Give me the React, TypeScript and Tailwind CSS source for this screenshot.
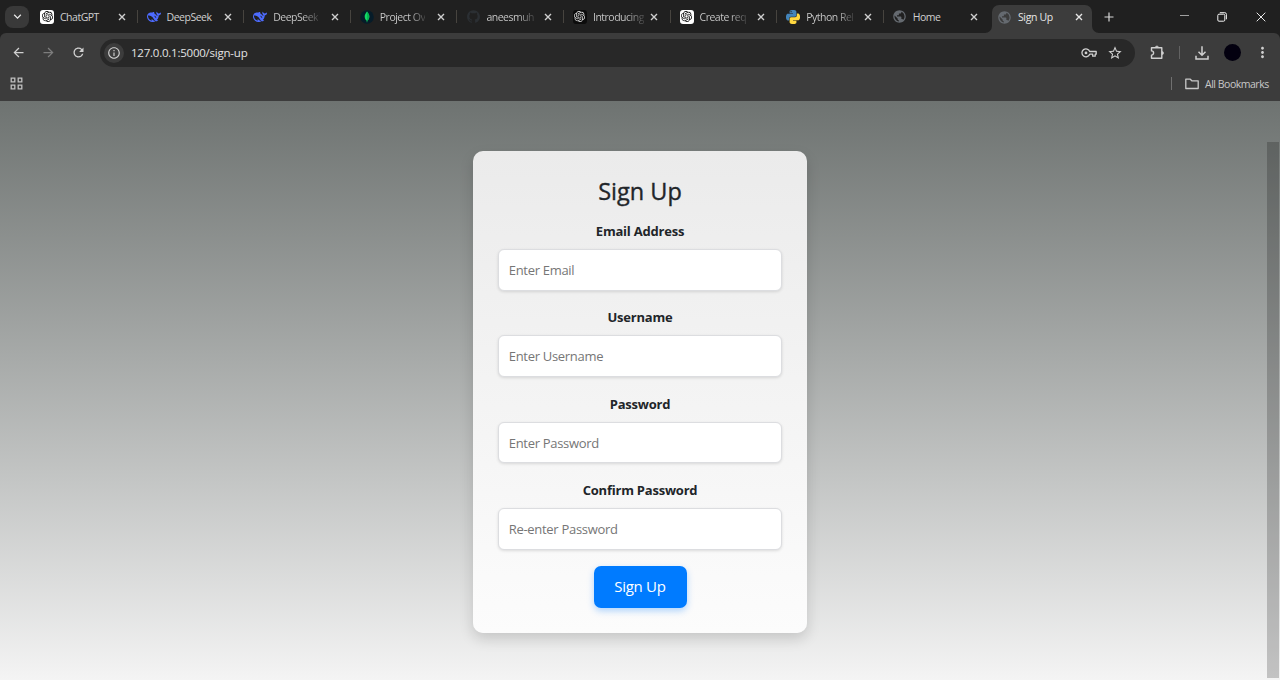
import React from "react";
import { SiOpenai, SiGithub } from "react-icons/si";
import {
  MdArrowBack, MdArrowForward, MdRefresh, MdInfoOutline, MdStarBorder,
  MdMoreVert, MdPublic, MdKeyboardArrowDown,
} from "react-icons/md";

const GptLight = () => (
  <span className="flex size-[14px] items-center justify-center rounded-[3px] bg-white text-black">
    <SiOpenai className="size-[11px]" />
  </span>
);

const GptDark = () => (
  <span className="flex size-[14px] items-center justify-center rounded-[3px] bg-[#0c0c0c] text-[#e4e4e4]">
    <SiOpenai className="size-[11px]" />
  </span>
);

const DeepSeek = () => (
  <svg viewBox="0 0 24 24" className="size-[14px]" fill="#4d6bfe">
    <path d="M23.748 4.482c-.254-.124-.364.113-.512.234-.051.039-.094.09-.137.136-.372.397-.806.657-1.373.626-.829-.046-1.537.214-2.163.848-.133-.782-.575-1.248-1.247-1.548-.352-.156-.708-.311-.955-.65-.172-.241-.219-.51-.305-.774-.055-.16-.11-.323-.293-.35-.2-.031-.278.136-.356.276-.313.572-.434 1.202-.422 1.84.027 1.436.633 2.58 1.838 3.393.137.093.172.187.129.323-.082.28-.18.552-.266.833-.055.179-.137.217-.329.14a5.526 5.526 0 01-1.736-1.18c-.857-.828-1.631-1.742-2.597-2.458a11.365 11.365 0 00-.689-.471c-.985-.957.13-1.743.388-1.836.27-.098.093-.432-.779-.428-.872.004-1.67.295-2.687.684a3.055 3.055 0 01-.465.137 9.597 9.597 0 00-2.883-.102c-1.885.21-3.39 1.102-4.497 2.623C.082 8.606-.231 10.684.152 12.85c.403 2.284 1.569 4.175 3.36 5.653 1.858 1.533 3.997 2.284 6.438 2.14 1.482-.085 3.133-.284 4.994-1.86.47.234.962.327 1.78.397.63.059 1.236-.03 1.705-.128.735-.156.684-.837.419-.961-2.155-1.004-1.682-.595-2.113-.926 1.096-1.296 2.746-2.642 3.392-7.003.05-.347.007-.565 0-.845-.004-.17.035-.237.23-.256a4.173 4.173 0 001.545-.475c1.396-.763 1.96-2.015 2.093-3.517.02-.23-.004-.467-.247-.588zM11.581 18c-2.089-1.642-3.102-2.183-3.52-2.16-.392.024-.321.471-.235.763.09.288.207.486.371.739.114.167.192.416-.113.603-.673.416-1.842-.14-1.897-.167-1.361-.802-2.5-1.86-3.301-3.307-.774-1.393-1.224-2.887-1.298-4.482-.02-.386.093-.522.477-.592a4.696 4.696 0 011.529-.039c2.132.312 3.946 1.265 5.468 2.774.868.86 1.525 1.887 2.202 2.891.72 1.066 1.494 2.082 2.48 2.914.348.292.625.514.891.677-.802.09-2.14.11-3.054-.614zm1-6.44a.306.306 0 01.415-.287.302.302 0 01.2.288.306.306 0 01-.31.307.303.303 0 01-.304-.308zm3.11 1.596c-.2.081-.399.151-.59.16a1.245 1.245 0 01-.798-.254c-.274-.23-.47-.358-.552-.758a1.73 1.73 0 01.016-.588c.07-.327-.008-.537-.239-.727-.187-.156-.426-.199-.688-.199a.559.559 0 01-.254-.078c-.11-.054-.2-.19-.114-.358.028-.054.16-.186.192-.21.356-.202.767-.136 1.146.016.352.144.618.408 1.001.782.391.451.462.576.685.914.176.265.336.537.445.848.067.195-.019.354-.25.452z" />
  </svg>
);

const Mongo = () => (
  <svg viewBox="0 0 14 14" className="size-[14px]">
    <circle cx="7" cy="7" r="6.8" fill="#061c29" />
    <path d="M7 1.6C8.7 3.6 9.3 5 9.3 6.7c0 2-1 3.3-2 4v1.5h-.6v-1.5c-1-.7-2-2-2-4C4.7 5 5.3 3.6 7 1.6z" fill="#12d765" />
    <path d="M7 1.6C8.7 3.6 9.3 5 9.3 6.7c0 2-1 3.3-2.3 4z" fill="#06b653" />
  </svg>
);

const Python = () => (
  <svg viewBox="0 0 24 24" className="size-[14px]">
    <path fill="#4384b9" d="M14.25.18l.9.2.73.26.59.3.45.32.34.34.25.34.16.33.1.3.04.26.02.2-.01.13V8.5l-.05.63-.13.55-.21.46-.26.38-.3.31-.33.25-.35.19-.35.14-.33.1-.3.07-.26.04-.21.02H8.77l-.69.05-.59.14-.5.22-.41.27-.33.32-.27.35-.2.36-.15.37-.1.35-.07.32-.04.27-.02.21v3.06H3.17l-.21-.03-.28-.07-.32-.12-.35-.18-.36-.26-.36-.36-.35-.46-.32-.59-.28-.73-.21-.88-.14-1.05-.05-1.23.06-1.22.16-1.04.24-.87.32-.71.36-.57.4-.44.42-.33.42-.24.4-.16.36-.1.32-.05.24-.01h.16l.06.01h8.16v-.83H6.18l-.01-2.75-.02-.37.05-.34.11-.31.17-.28.25-.26.31-.23.38-.2.44-.18.51-.15.58-.12.64-.1.71-.06.77-.04.84-.02 1.27.05zm-6.3 1.98l-.23.33-.08.41.08.41.23.34.33.22.41.09.41-.09.33-.22.23-.34.08-.41-.08-.41-.23-.33-.33-.22-.41-.09-.41.09z" />
    <path fill="#ffd83f" d="M21.04 6.11l.28.06.32.12.35.18.36.27.36.35.35.47.32.59.28.73.21.88.14 1.04.05 1.23-.06 1.23-.16 1.04-.24.86-.32.71-.36.57-.4.45-.42.33-.42.24-.4.16-.36.09-.32.05-.24.02-.16-.01h-8.22v.82h5.84l.01 2.76.02.36-.05.34-.11.31-.17.29-.25.25-.31.24-.38.2-.44.17-.51.15-.58.13-.64.09-.71.07-.77.04-.84.01-1.27-.04-1.07-.14-.9-.2-.73-.25-.59-.3-.45-.33-.34-.34-.25-.34-.16-.33-.1-.3-.04-.25-.02-.2.01-.13v-5.34l.05-.64.13-.54.21-.46.26-.38.3-.32.33-.24.35-.2.35-.14.33-.1.3-.06.26-.04.21-.02.13-.01h5.84l.69-.05.59-.14.5-.21.41-.28.33-.32.27-.35.2-.36.15-.36.1-.35.07-.32.04-.28.02-.21V6.07h2.09l.14.01z" />
  </svg>
);

const Globe = () => <MdPublic className="size-[15px] shrink-0 text-[#656a70]" />;

const Close = () => (
  <svg viewBox="0 0 8 8" className="size-2 shrink-0" fill="none" stroke="currentColor" strokeWidth="1.4">
    <path d="M1 1l6 6M7 1L1 7" />
  </svg>
);

const Key = ({ className }: { className: string }) => (
  <svg viewBox="0 0 16 10" className={className} fill="none" stroke="currentColor" strokeWidth="1.3">
    <path d="M8.700 3.500h6.500v2.700h-1v2h-2.500v-2H8.700a4 4 0 110-2.700z" strokeLinejoin="round" />
    <circle cx="5" cy="4.900" r="1.400" fill="currentColor" stroke="none" />
  </svg>
);

const Puzzle = ({ className }: { className: string }) => (
  <svg viewBox="0 0 15 15" className={className} fill="none" stroke="currentColor" strokeWidth="1.400" strokeLinejoin="round">
    <path d="M1.500 2.700h10.300v10.600H1.500v-3.200a2.100 2.100 0 000-4.200z" />
    <path d="M5.300 2.500a1.600 1.600 0 013.200 0zM12 6.400a1.600 1.600 0 010 3.200z" fill="currentColor" strokeWidth=".5" />
  </svg>
);

const Download = ({ className }: { className: string }) => (
  <svg viewBox="0 0 14 14" className={className} fill="none" stroke="currentColor" strokeWidth="1.500">
    <path d="M7 .3v8.700M3.500 5.700L7 9.200l3.500-3.500M1 9.700v3.200h12V9.700" />
  </svg>
);

const Folder = ({ className }: { className: string }) => (
  <svg viewBox="0 0 14 12" className={className} fill="none" stroke="currentColor" strokeWidth="1.300" strokeLinejoin="round">
    <path d="M.8 1.200h4.500l1.500 1.600h6.400v7.700H.8z" />
  </svg>
);

const tabs: { icon: React.ReactNode; title: string; fade?: boolean }[] = [
  { icon: <GptLight />, title: "ChatGPT" },
  { icon: <DeepSeek />, title: "DeepSeek" },
  { icon: <DeepSeek />, title: "DeepSeek", fade: true },
  { icon: <Mongo />, title: "Project Ov", fade: true },
  { icon: <SiGithub className="size-[13px] text-[#2b2f33]" />, title: "aneesmuh", fade: true },
  { icon: <GptDark />, title: "Introducing", fade: true },
  { icon: <GptLight />, title: "Create req", fade: true },
  { icon: <Python />, title: "Python Rel", fade: true },
  { icon: <Globe />, title: "Home" },
];

function Tab({ icon, title, fade, last }: { icon: React.ReactNode; title: string; fade?: boolean; last: boolean }) {
  return (
    <div className="flex h-full w-[106.6px] shrink-0 items-center pl-[9px] text-[#cfcfcf]">
      <span className="flex w-[14px] shrink-0 justify-center">{icon}</span>
      <span className="ml-1.5 flex w-[48px] text-[10.5px] leading-4 tracking-[-0.5px] whitespace-nowrap">
        <span className={fade ? "bg-linear-to-r from-[#cfcfcf] from-65% to-[#444444] bg-clip-text text-transparent" : ""}>{title}</span>
      </span>
      <span className="ml-[9.5px] flex"><Close /></span>
      {!last && <span className="ml-auto h-[13px] w-px bg-[#47443f]" />}
    </div>
  );
}

function Field({ label, placeholder }: { label: string; placeholder: string }) {
  return (
    <div className="flex h-[86.4px] flex-col">
      <label className="text-center text-[13px] leading-5 font-bold tracking-[-0.22px] text-[#212529]">{label}</label>
      <input
        placeholder={placeholder}
        className="mt-2 h-[41.5px] w-full rounded-[6px] border border-[#dcdde0] bg-white px-[9.5px] text-[13px] tracking-[-0.3px] shadow-[0_1px_3px_rgba(0,0,0,0.12)] outline-none placeholder:text-[#767676]"
      />
    </div>
  );
}

export default function App() {
  return (
    <div className="flex h-[680px] w-[1280px] flex-col overflow-hidden bg-[#202020] font-['Open_Sans','Noto_Sans',sans-serif]">
      <div className="flex h-[33px] shrink-0 items-center">
        <span className="ml-[5px] flex h-[22px] w-6 items-center justify-center rounded-[8px] bg-[#393939] text-[#e8e8e8]">
          <MdKeyboardArrowDown className="size-[15px]" />
        </span>
        <div className="ml-[2px] flex h-full">
          {tabs.map((t, i) => <Tab key={i} {...t} last={i === tabs.length - 1} />)}
        </div>
        <div className="relative mt-[5px] ml-[1.6px] flex h-7 w-[100px] shrink-0 items-center rounded-t-[7px] bg-[#3c3c3c] pl-[5px] text-[#e6e6e6]">
          <svg className="absolute bottom-0 -left-[7px] size-[7px]" viewBox="0 0 7 7"><path d="M7 0v7H0a7 7 0 007-7z" fill="#3c3c3c" /></svg>
          <svg className="absolute -right-[7px] bottom-0 size-[7px]" viewBox="0 0 7 7"><path d="M0 0v7h7a7 7 0 01-7-7z" fill="#3c3c3c" /></svg>
          <span className="-mt-[4px] flex w-[15px]"><Globe /></span>
          <span className="-mt-[4px] ml-1.5 w-[52px] text-[10.5px] leading-4 tracking-[-0.35px]">Sign Up</span>
          <span className="-mt-[4px] ml-[5px] flex"><Close /></span>
        </div>
        <svg className="ml-[12.5px] size-[10px]" viewBox="0 0 10 10" stroke="#d8d8d8" strokeWidth="1.2"><path d="M5 .5v9M.5 5h9" /></svg>
        <svg className="ml-[66px] size-[9px]" viewBox="0 0 9 9" stroke="#a0a0a0"><path d="M0 3.5h9" /></svg>
        <svg className="ml-[28px] size-[10px]" viewBox="0 0 10 10" fill="none" stroke="#f2f2f2"><rect x=".8" y="2.2" width="7" height="7" rx="1.2" /><path d="M2.8.7h5q1.6 0 1.6 1.6v5" /></svg>
        <svg className="ml-[28.5px] size-[10px]" viewBox="0 0 10 10" stroke="#e8e8e8"><path d="M.7.7l8.6 8.6M9.3.7L.7 9.3" /></svg>
      </div>

      <div className="flex h-[39px] shrink-0 items-center rounded-t-[6px] bg-[#3c3c3c] text-[#d0d0d0]">
        <MdArrowBack className="ml-[11px] size-[15px]" />
        <MdArrowForward className="ml-[15px] size-[15px] text-[#7d7d7d]" />
        <MdRefresh className="ml-[15px] size-[15px]" />
        <div className="ml-[14px] flex h-7 w-[1035px] items-center rounded-full bg-[#282828] pl-1">
          <span className="flex size-5 items-center justify-center rounded-full bg-[#3c3c3c]"><MdInfoOutline className="size-[14px]" /></span>
          <span className="ml-[7px] text-[11.5px] leading-4 tracking-[-0.23px] text-[#e3e3e3]">127.0.0.1:5000/sign-up</span>
          <Key className="ml-auto h-[10px] w-4" />
          <MdStarBorder className="mr-[12px] ml-[10px] size-[16px]" />
        </div>
        <Puzzle className="ml-[15px] size-[15px]" />
        <span className="ml-[14px] h-[13px] w-px bg-[#626262]" />
        <Download className="ml-[15px] size-[14px]" />
        <span className="ml-[15px] size-[17px] rounded-full bg-[#03000f]" />
        <MdMoreVert className="ml-[13px] size-[17px]" />
      </div>

      <div className="flex h-[29px] shrink-0 items-center bg-[#3c3c3c] pb-[6px] text-[#c8c8c8]">
        <svg className="ml-[10px] size-[13px]" viewBox="0 0 13 13" fill="none" stroke="#c0c0c0" strokeWidth="1.3"><path d="M1.200 1.200h3.600v3.600H1.200zM8.200 1.200h3.600v3.600H8.200zM1.200 8.200h3.600v3.600H1.200zM8.200 8.200h3.600v3.600H8.200z" /></svg>
        <span className="ml-auto h-[13px] w-px bg-[#707070]" />
        <Folder className="ml-[13px] h-3 w-[14px]" />
        <span className="mr-[11px] ml-[6px] w-[64px] text-[10.5px] leading-4 tracking-[-0.48px] whitespace-nowrap">All Bookmarks</span>
      </div>

      <main className="relative flex flex-1 items-start justify-center bg-linear-to-b from-[#6e7371] to-[#f4f4f4] pt-[50px]">
        <form className="flex h-[482px] w-[333.5px] flex-col rounded-[10px] bg-linear-to-b from-[#ebebeb] to-[#fcfcfc] px-[25px] pt-[24px] shadow-[0_6px_14px_rgba(0,0,0,0.15)]">
          <h1 className="h-[46px] text-center text-[23.5px] leading-8 font-medium text-[#212529] [-webkit-text-stroke:0.35px_#212529]">Sign Up</h1>
          <Field label="Email Address" placeholder="Enter Email" />
          <Field label="Username" placeholder="Enter Username" />
          <Field label="Password" placeholder="Enter Password" />
          <Field label="Confirm Password" placeholder="Re-enter Password" />
          <button type="button" className="-mt-px h-[42px] w-[93px] self-center rounded-[7px] bg-[#007bff] text-[15px] tracking-[-0.3px] text-white shadow-[0_3px_7px_rgba(0,123,255,0.3)]">Sign Up</button>
        </form>
        <div className="absolute top-[41px] right-px h-[536px] w-[12px] bg-black/20" />
      </main>
    </div>
  );
}
